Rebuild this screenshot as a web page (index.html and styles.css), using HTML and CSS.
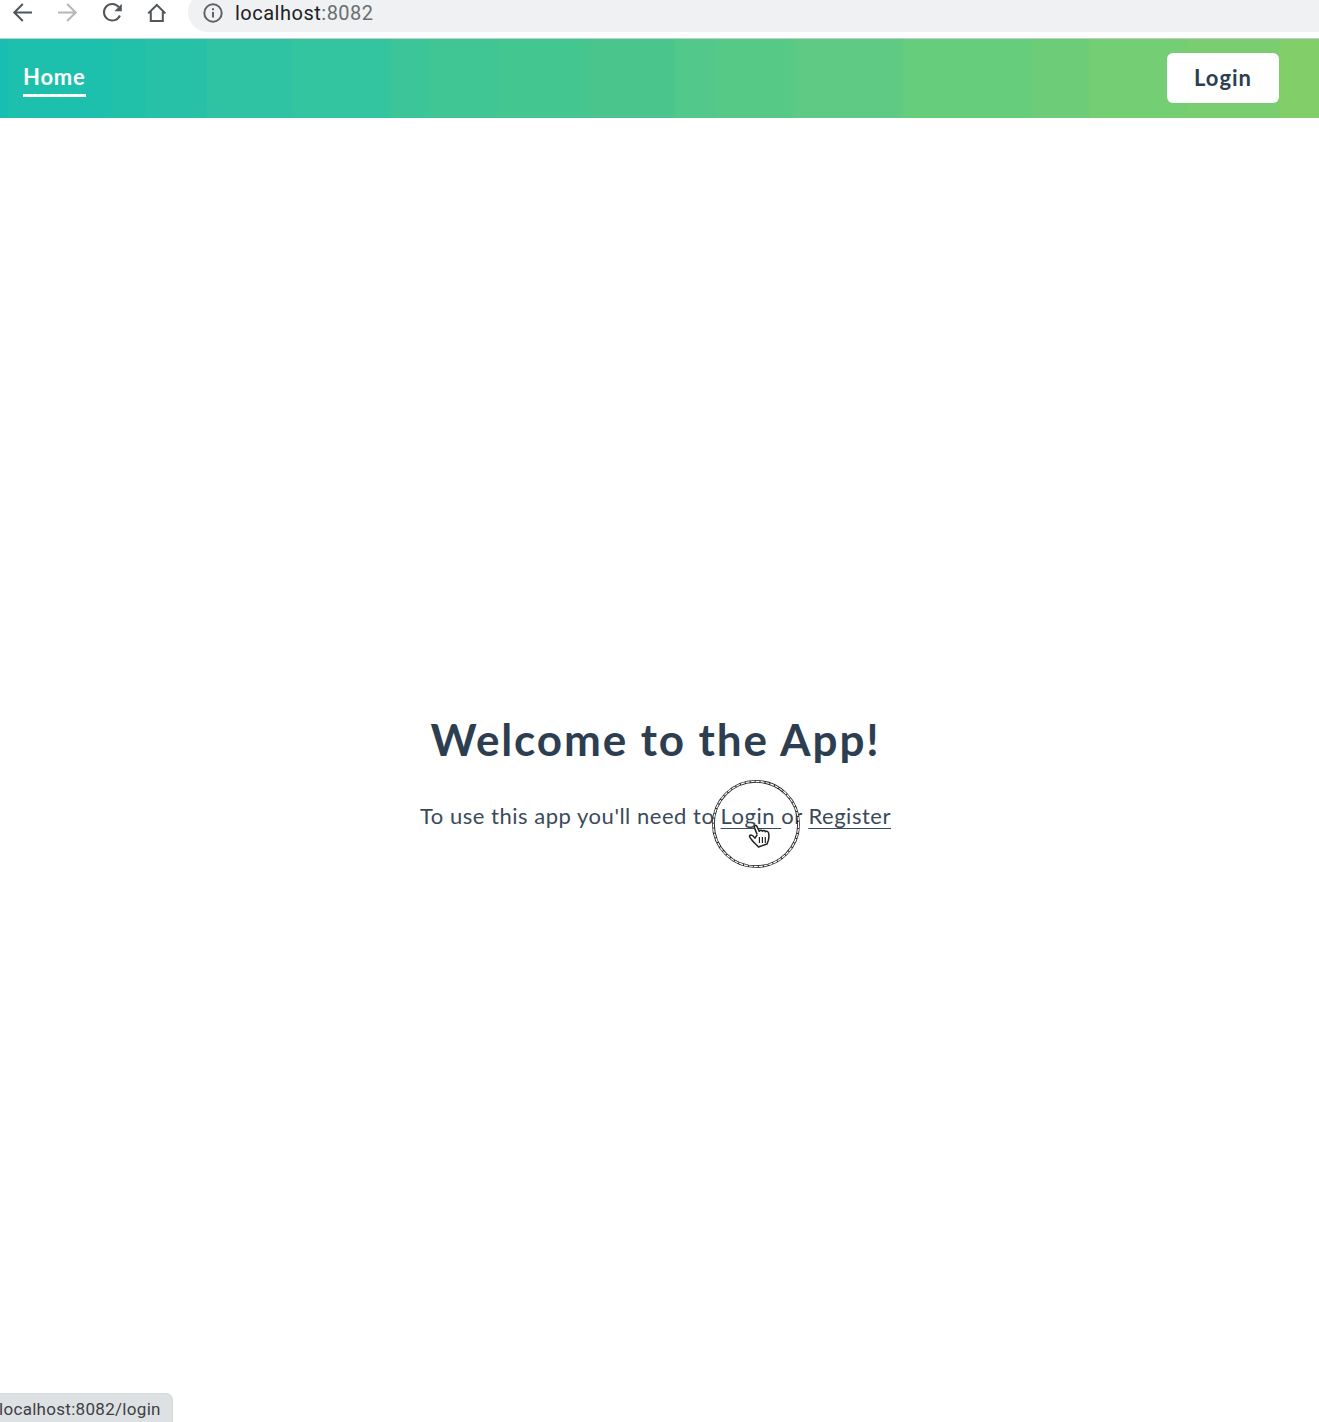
FILE: index.html
```html
<!DOCTYPE html>
<html lang="en">
<head>
<meta charset="utf-8">
<title>Welcome</title>
<link rel="stylesheet" href="styles.css">
</head>
<body>
<div class="window">
  <header class="toolbar">
    <svg class="tool" viewBox="0 0 24 24"><path d="M22 12.5H4.5M12.8 4 4.3 12.5 12.8 21"/></svg>
    <svg class="tool tool-off" viewBox="0 0 24 24"><path d="M3 12.5H20.5M12.2 4 20.7 12.5 12.2 21"/></svg>
    <svg class="tool" viewBox="0 0 24 24"><path d="M18.7 7A8.3 8.3 0 1 0 19.9 15.5"/><path class="solid" d="M21.8 3.8v7.4h-7.4z"/></svg>
    <svg class="tool" viewBox="0 0 24 24"><path d="M3.2 13.4 11.8 5 20.4 13.4M5.8 11.5V21h12v-9.5"/></svg>
    <div class="address">
      <svg class="info" viewBox="0 0 20 20"><circle cx="10" cy="10" r="8.7"/><path d="M10 9v5.6M10 5.2v2"/></svg>
      <span class="url">localhost<span class="port">:8082</span></span>
    </div>
  </header>
  <nav class="nav">
    <a class="nav-home">Home</a>
    <a class="nav-login">Login</a>
  </nav>
  <main class="page">
    <h1 class="title">Welcome to the App!</h1>
    <p class="intro">To use this app you'll need to <a class="link">Login </a>or <a class="link">Register</a></p>
  </main>
  <div class="status">localhost:8082/login</div>
  <svg class="pointer" viewBox="0 0 90 90">
    <circle class="ring" cx="45" cy="45" r="42.6"/>
    <circle class="ring-dash" cx="45" cy="45" r="42.6"/>
    <path class="hand" d="M46.2 55.6 43.3 48.4C42.8 46.7 45.1 45.8 45.9 47.4L48.3 52.3C49 51 50.7 51 51.3 52.2 52.2 51 54 51.3 54.4 52.7 55.7 51.7 57.2 52.4 57.6 54.2 58.2 57 57.9 59.5 57.3 61.5L56 65 47.5 68C45.5 65.5 42.8 64 40.5 60.5 38.5 57.8 37.8 57 39.2 56.2 41 55.4 42.7 57.2 44 59.2L46.2 55.6"/>
    <path class="lines" d="M48.4 58v6M51.4 58v6M54.3 58v6"/>
  </svg>
</div>
</body>
</html>
```
FILE: styles.css
```css
body {
  margin: 0;
  background: #fff;
  color: #2c3e50;
  font-family: Lato, "Open Sans", sans-serif;
}

.window {
  position: relative;
  display: flex;
  flex-direction: column;
  height: 1422px;
  overflow: hidden;
}

.toolbar {
  display: flex;
  align-items: flex-start;
  gap: 21px;
  height: 38px;
  padding-left: 10px;
  border-bottom: 1px solid #c5cdca;
  flex: none;
}

.tool {
  width: 24px;
  height: 24px;
  flex: none;
  fill: none;
  stroke: #51565a;
  stroke-width: 2;
}

.tool-off { stroke: #b4b7ba; }
.solid { fill: #51565a; stroke: none; }

.address {
  display: flex;
  align-items: center;
  gap: 12px;
  flex: 1;
  height: 40px;
  margin: -8px 0 0 -2px;
  padding-left: 15px;
  border-radius: 20px 0 0 20px;
  background: #f0f1f3;
}

.info {
  width: 20px;
  height: 20px;
  margin-top: 2px;
  fill: none;
  stroke: #5f6368;
  stroke-width: 2;
}

.url {
  margin-top: 2px;
  color: #202124;
  font: 20px/24px Roboto, sans-serif;
  letter-spacing: 0.5px;
}

.port { color: #6a6e72; }

.nav {
  display: flex;
  align-items: center;
  justify-content: space-between;
  box-sizing: border-box;
  height: 79px;
  padding: 0 40px 0 23px;
  background: linear-gradient(90deg,
    #19beb2 0 7px, #1cc0ac 9px 110px, #21c1a9 112px 145px,
    #26c1a6 147px 207px, #2fc3a4 207px 292px, #33c4a0 292px 385px,
    #3bc598 393px 424px, #40c695 428px 498px, #44c691 500px 580px,
    #4ac68c 594px 672px, #52c98a 678px 716px, #57c986 720px 790px,
    #5eca83 798px 900px, #66cd7c 906px 1030px, #6dcc78 1034px 1088px,
    #74ce74 1090px 1180px, #7ace70 1195px 1278px, #82ce69 1282px);
  flex: none;
}

.nav-home {
  padding: 1px 0 2px;
  border-bottom: 3px solid #fff;
  color: #fff;
  font-size: 22px;
  font-weight: 700;
  line-height: 30px;
  letter-spacing: 0.8px;
}

.nav-login {
  box-sizing: border-box;
  width: 112px;
  height: 50px;
  margin-top: -1px;
  border-radius: 6px;
  background: #fff;
  font-size: 22px;
  font-weight: 700;
  line-height: 50px;
  letter-spacing: 1px;
  text-align: center;
}

.page {
  flex: 1;
  padding-top: 593px;
  padding-right: 8px;
  text-align: center;
}

.title {
  margin: 0;
  font-size: 44px;
  font-weight: 700;
  line-height: 56px;
  letter-spacing: 1.9px;
}

.intro {
  margin: 34px 0 0;
  color: #3a4a5a;
  font-size: 22px;
  line-height: 30px;
  letter-spacing: 0.52px;
}

.link {
  text-decoration: underline;
  text-decoration-thickness: 1px;
  text-underline-offset: 4px;
  white-space: pre;
}

.status {
  box-sizing: border-box;
  width: 173px;
  height: 29px;
  border-top: 1px solid #d6d9da;
  border-right: 1px solid #d6d9da;
  border-radius: 0 7px 0 0;
  background: #dee1e3;
  color: #3c4043;
  font: 17px/30px Roboto, sans-serif;
  letter-spacing: 0.3px;
  text-indent: -1px;
  white-space: nowrap;
  flex: none;
}

.pointer {
  position: absolute;
  left: 711px;
  top: 779px;
  width: 90px;
  height: 90px;
  fill: none;
}

.ring { stroke: #222; stroke-width: 2.8; }
.ring-dash { stroke: #fff; stroke-width: 1.2; stroke-dasharray: 4 1; }
.hand { fill: #fff; stroke: #222; stroke-width: 1.5; stroke-linejoin: round; }
.lines { stroke: #222; stroke-width: 1.2; }
```
